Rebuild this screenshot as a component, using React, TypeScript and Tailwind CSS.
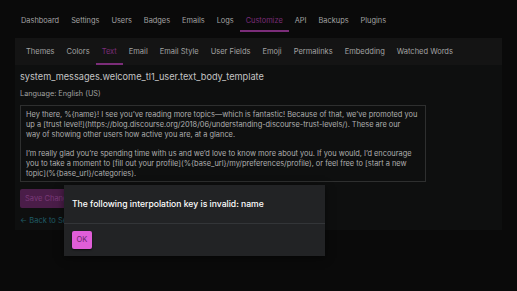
import React from "react";

const topNav = ["Dashboard", "Settings", "Users", "Badges", "Emails", "Logs", "Customize", "API", "Backups", "Plugins"];
const subNav = ["Themes", "Colors", "Text", "Email", "Email Style", "User Fields", "Emoji", "Permalinks", "Embedding", "Watched Words"];

const App = () => {
  return (
    <div className="relative h-[291px] w-[517px] overflow-hidden bg-[#0a0a0a] font-['Inter',sans-serif] text-[#a3a3a3]">
      <div className="flex items-end gap-[12px] px-[21px] pt-[15px]">
        {topNav.map((item) => (
          <div
            key={item}
            className={
              item === "Customize"
                ? "-mx-[6px] whitespace-nowrap border-b-2 border-[#7b2d79] px-[6px] pb-[4px] text-[7.4px] leading-[11px] text-[#7b2d79]"
                : "whitespace-nowrap border-b-2 border-transparent pb-[4px] text-[7.4px] leading-[11px]"
            }
          >
            {item}
          </div>
        ))}
      </div>

      <div className="mx-[15px] mt-[6px] flex h-[27px] items-stretch bg-[#141414] px-[5px]">
        {subNav.map((item) => (
          <div
            key={item}
            className={
              item === "Text"
                ? "flex items-center whitespace-nowrap border-b-2 border-[#7b2d79] px-[6px] pt-[2px] text-[7.5px] text-[#7b2d79]"
                : "flex items-center whitespace-nowrap border-b-2 border-transparent px-[6px] pt-[2px] text-[7.5px]"
            }
          >
            {item}
          </div>
        ))}
      </div>

      <div className="mx-[15px] h-[165px] bg-[#0e0f0f] px-[5px] pt-[5px]">
        <div className="text-[9.2px] leading-[14px] text-[#c4c4c4]">system_messages.welcome_tl1_user.text_body_template</div>
        <div className="mt-[5px] text-[7.3px] leading-[10px] text-[#a3a3a3]">Language: English (US)</div>
        <div className="mt-[6px] h-[77px] w-[406px] border border-[#2e2f2f] px-[5px] pt-[4px] text-[7.4px] leading-[10px] text-[#b0b0b0]">
          <p>
            Hey there, %{"{name}"}! I see you’ve reading more topics—which is fantastic! Because of that, we’ve promoted you
            <br />
            up a [trust level!](https://blog.discourse.org/2018/06/understanding-discourse-trust-levels/). These are our
            <br />
            way of showing other users how active you are, at a glance.
          </p>
          <p className="mt-[9px]">
            I’m really glad you’re spending time with us and we’d love to know more about you. If you would, I’d encourage
            <br />
            you to take a moment to [fill out your profile](%{"{base_url}"}/my/preferences/profile), or feel free to [start a new
            <br />
            topic](%{"{base_url}"}/categories).
          </p>
        </div>
        <div className="mt-[7px] flex">
          <div className="rounded-[2px] bg-[#4a1d48] px-[5px] py-[5px] text-[7.5px] leading-[9px] text-[#7a3a78]">Save Changes</div>
        </div>
        <div className="mt-[8px] text-[7.5px] leading-[10px] text-[#1f5c66]">← Back to Settings</div>
      </div>

      <div className="absolute left-[64px] top-[185px] w-[261px] bg-[#222325] shadow-[0_2px_8px_rgba(0,0,0,0.5)]">
        <div className="border-b border-[#333538] px-[8px] pt-[14px] pb-[14px] text-[8.6px] font-medium leading-[10px] text-white">
          The following interpolation key is invalid: name
        </div>
        <div className="px-[8px] pt-[7px] pb-[7px]">
          <div className="flex h-[18px] w-[20px] items-center justify-center rounded-[2px] bg-[#e05ed8] text-[7.5px] text-[#6a2468] shadow-[0_1px_2px_rgba(0,0,0,0.6)]">OK</div>
        </div>
      </div>
    </div>
  );
};

export default App;
